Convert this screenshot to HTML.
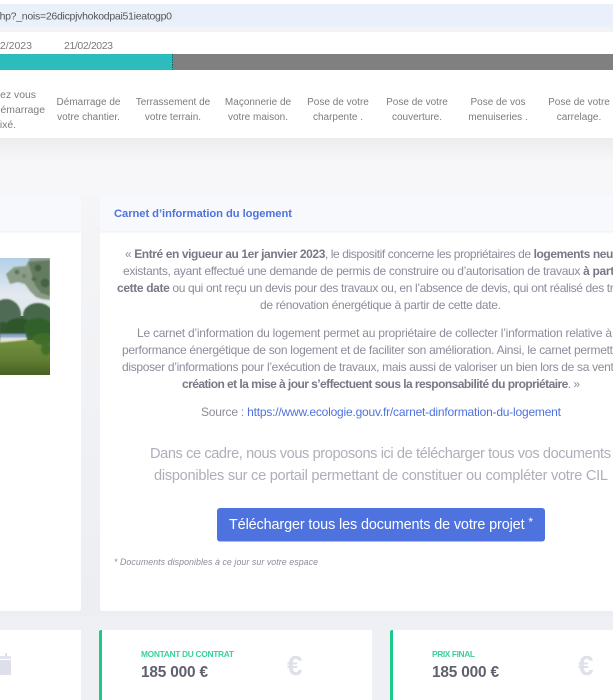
<!DOCTYPE html>
<html lang="fr">
<head>
<meta charset="utf-8">
<title>Carnet d'information du logement</title>
<style>
html,body{margin:0;padding:0;width:613px;height:700px;overflow:hidden;background:#eef0f3}
svg{display:block;position:absolute;left:0;top:0;filter:blur(.3px)}
text{font-family:"Liberation Sans",sans-serif}
.st{font-size:10px;fill:#7c7c7c;text-anchor:middle}
.ste{font-size:10.4px;fill:#7c7c7c;text-anchor:end}
.p{font-size:12px;fill:#8b8d9a}
.p tspan.b{font-weight:bold;fill:#777985}
.big{font-size:14.6px;fill:#adafba}
.lab{font-size:8.4px;font-weight:bold;fill:#3ccf9a}
.val{font-size:15.4px;font-weight:bold;fill:#5f6170}
.eur{font-size:28px;font-weight:bold;fill:#dfe0ea}
</style>
</head>
<body>
<svg width="613" height="700" viewBox="0 0 613 700" xmlns="http://www.w3.org/2000/svg">
<defs>
<linearGradient id="bg" x1="0" y1="0" x2="0" y2="1"><stop offset="0" stop-color="#ececee"/><stop offset=".4" stop-color="#f7f7f9"/><stop offset="1" stop-color="#f7f7f9"/></linearGradient>
<linearGradient id="gut" x1="0" y1="0" x2="0" y2="1"><stop offset="0" stop-color="#f5f5f7"/><stop offset="1" stop-color="#eceef2"/></linearGradient>
<linearGradient id="grass" x1="0" y1="0" x2="0" y2="1"><stop offset="0" stop-color="#72903f"/><stop offset=".6" stop-color="#607c32"/><stop offset="1" stop-color="#465f22"/></linearGradient>
<linearGradient id="sky" x1="0" y1="0" x2="0" y2="1"><stop offset="0" stop-color="#b4d0e6"/><stop offset=".6" stop-color="#e4e9ee"/><stop offset="1" stop-color="#dfe8ee"/></linearGradient>
<filter id="bl" x="-20%" y="-20%" width="140%" height="140%"><feGaussianBlur stdDeviation=".9"/></filter>
<clipPath id="ph"><rect x="0" y="258" width="50" height="117"/></clipPath>
</defs>
<rect x="0" y="0" width="613" height="700" fill="#eef0f3"/>
<rect x="0" y="196" width="613" height="420" fill="url(#gut)"/>
<rect x="0" y="0" width="613" height="4" fill="#ffffff"/>
<rect x="0" y="4" width="613" height="23" fill="#eaf0f9"/>
<rect x="0" y="27" width="613" height="5" fill="#f3f3f4"/>
<text x="-6" y="19.5" font-size="10.5" fill="#555" textLength="178" lengthAdjust="spacing">php?_nois=26dicpjvhokodpai51ieatogp0</text>

<rect x="0" y="32" width="613" height="106" fill="#ffffff"/>
<rect x="0" y="138" width="613" height="58" fill="url(#bg)"/>
<text x="32" y="49" font-size="10.5" fill="#7a7a7a" text-anchor="end">02/2023</text>
<text x="64" y="49" font-size="10.5" fill="#7a7a7a" textLength="49">21/02/2023</text>
<rect x="0" y="54" width="173" height="16" fill="#2dbcbc"/>
<rect x="173" y="54" width="440" height="16" fill="#808080"/>
<line x1="172.5" y1="54" x2="172.5" y2="70" stroke="#1d5a5e" stroke-width="1" stroke-dasharray="1.5 1"/>

<text class="ste" x="36" y="98">Rendez vous</text>
<text class="ste" x="45" y="113">date de démarrage</text>
<text class="ste" x="16" y="128">fixé.</text>
<text class="st" x="88.5" y="105">Démarrage de</text><text class="st" x="88.5" y="120">votre chantier.</text>
<text class="st" x="173" y="105">Terrassement de</text><text class="st" x="173" y="120">votre terrain.</text>
<text class="st" x="258" y="105">Maçonnerie de</text><text class="st" x="258" y="120">votre maison.</text>
<text class="st" x="338" y="105">Pose de votre</text><text class="st" x="338" y="120">charpente .</text>
<text class="st" x="417" y="105">Pose de votre</text><text class="st" x="417" y="120">couverture.</text>
<text class="st" x="498" y="105">Pose de vos</text><text class="st" x="498" y="120">menuiseries .</text>
<text class="st" x="579" y="105">Pose de votre</text><text class="st" x="579" y="120">carrelage.</text>

<!-- left card -->
<rect x="-10" y="196" width="91" height="415" rx="3" fill="#fff"/>
<rect x="-10" y="196" width="91" height="36" rx="3" fill="#f8f9fc"/>
<rect x="-10" y="231.5" width="91" height="1" fill="#eef0f5"/>
<g clip-path="url(#ph)">
<rect x="0" y="258" width="50" height="60" fill="url(#sky)"/>
<rect x="0" y="316" width="50" height="26" fill="#3f6232"/>
<rect x="0" y="340" width="50" height="35" fill="url(#grass)"/>
<g filter="url(#bl)">
<!-- foliage top right -->
<path d="M6 274 L14 267 L26 266 L30 258 L50 258 L50 300 L42 299 L36 297 L30 291 L25 284 L18 282 L10 284Z" fill="#8a9c87"/>
<path d="M28 262 L50 260 L50 296 L41 293 L35 285 L31 272Z" fill="#647c61"/>
<circle cx="38" cy="268" r="3.500" fill="#466144"/>
<circle cx="45" cy="283" r="4.500" fill="#476245"/>
<circle cx="34" cy="279" r="2.500" fill="#526d50"/>
<circle cx="17" cy="272" r="2.500" fill="#5f755c"/>
<circle cx="24" cy="276" r="2" fill="#6d826a"/>
<!-- tree line -->
<ellipse cx="6" cy="315" rx="15" ry="16" fill="#4f6a54"/>
<ellipse cx="38" cy="315" rx="15" ry="12" fill="#466848"/>
<ellipse cx="19" cy="328" rx="14" ry="10" fill="#2f5629"/>
<ellipse cx="38" cy="328" rx="14" ry="10" fill="#33612b"/>
<rect x="0" y="322" width="6" height="12" fill="#365430"/>
<ellipse cx="43" cy="339" rx="10" ry="6" fill="#3f6e2c"/>
<ellipse cx="46" cy="349" rx="5" ry="6" fill="#456f2c"/>
<!-- pool -->
<rect x="0" y="334" width="26" height="4" fill="#8aa5cc"/>
<path d="M0 337.500 L27 337.500 L27 340 L0 342.500Z" fill="#e2e2d8"/>
</g>
</g>

<!-- main card -->
<rect x="100" y="196" width="540" height="415" rx="3" fill="#fff"/>
<path d="M100 232V199a3 3 0 0 1 3-3H640V232Z" fill="#f8f9fc"/>
<rect x="100" y="231.5" width="540" height="1" fill="#eef0f5"/>
<text x="114" y="217" font-size="11.2" font-weight="bold" fill="#4e73df" textLength="178" lengthAdjust="spacing">Carnet d’information du logement</text>

<text class="p" x="125" y="258" textLength="511" lengthAdjust="spacing">« <tspan class="b">Entré en vigueur au 1er janvier 2023</tspan>, le dispositif concerne les propriétaires de <tspan class="b">logements neufs et</tspan></text>
<text class="p" x="123" y="275" textLength="515" lengthAdjust="spacing">existants, ayant effectué une demande de permis de construire ou d’autorisation de travaux <tspan class="b">à partir de</tspan></text>
<text class="p" x="117" y="292" textLength="527" lengthAdjust="spacing"><tspan class="b">cette date</tspan> ou qui ont reçu un devis pour des travaux ou, en l’absence de devis, qui ont réalisé des travaux</text>
<text class="p" x="260" y="309" textLength="241" lengthAdjust="spacing">de rénovation énergétique à partir de cette date.</text>
<text class="p" x="137" y="337" textLength="487" lengthAdjust="spacing">Le carnet d’information du logement permet au propriétaire de collecter l’information relative à la</text>
<text class="p" x="122" y="354" textLength="517" lengthAdjust="spacing">performance énergétique de son logement et de faciliter son amélioration. Ainsi, le carnet permettra de</text>
<text class="p" x="122" y="371" textLength="517" lengthAdjust="spacing">disposer d’informations pour l’exécution de travaux, mais aussi de valoriser un bien lors de sa vente. La</text>
<text class="p" x="182" y="388" textLength="398" lengthAdjust="spacing"><tspan class="b">création et la mise à jour s’effectuent sous la responsabilité du propriétaire</tspan>. »</text>
<text class="p" x="201" y="416" textLength="360" lengthAdjust="spacing">Source : <tspan fill="#4e73df">https://www.ecologie.gouv.fr/carnet-dinformation-du-logement</tspan></text>

<text class="big" x="150" y="458" textLength="461" lengthAdjust="spacing">Dans ce cadre, nous vous proposons ici de télécharger tous vos documents</text>
<text class="big" x="154" y="480" textLength="454" lengthAdjust="spacing">disponibles sur ce portail permettant de constituer ou compléter votre CIL</text>

<rect x="217" y="508" width="328" height="33.500" rx="3" fill="#4e73df"/>
<text x="229" y="529" font-size="14.4" fill="#fff" textLength="304" lengthAdjust="spacing">Télécharger tous les documents de votre projet <tspan font-size="12" dy="-3">*</tspan></text>

<text x="114" y="565" font-size="8.8" font-style="italic" fill="#8b8d9a" textLength="204" lengthAdjust="spacing">* Documents disponibles à ce jour sur votre espace</text>

<!-- bottom cards -->
<rect x="-10" y="630" width="91" height="80" fill="#fff"/>
<path d="M-3 656H11V659H-3Z" fill="#e4e5ee"/>
<rect x="-3" y="660" width="14" height="15" rx="1" fill="#dddfeb"/>
<rect x="5" y="653" width="2" height="4" fill="#dddfeb"/>

<rect x="99" y="630" width="273" height="80" fill="#fff"/>
<path d="M102 630H101a2 2 0 0 0-2 2V700H102Z" fill="#1cc88a"/>
<text class="lab" x="141" y="657" textLength="93" lengthAdjust="spacing">MONTANT DU CONTRAT</text>
<text class="val" x="141" y="677" textLength="67" lengthAdjust="spacing">185 000 €</text>
<text class="eur" x="287" y="675">€</text>

<rect x="390" y="630" width="230" height="80" fill="#fff"/>
<path d="M393 630H392a2 2 0 0 0-2 2V700H393Z" fill="#1cc88a"/>
<text class="lab" x="432" y="657" textLength="43" lengthAdjust="spacing">PRIX FINAL</text>
<text class="val" x="432" y="677" textLength="67" lengthAdjust="spacing">185 000 €</text>
<text class="eur" x="578" y="675">€</text>
</svg>
</body>
</html>
